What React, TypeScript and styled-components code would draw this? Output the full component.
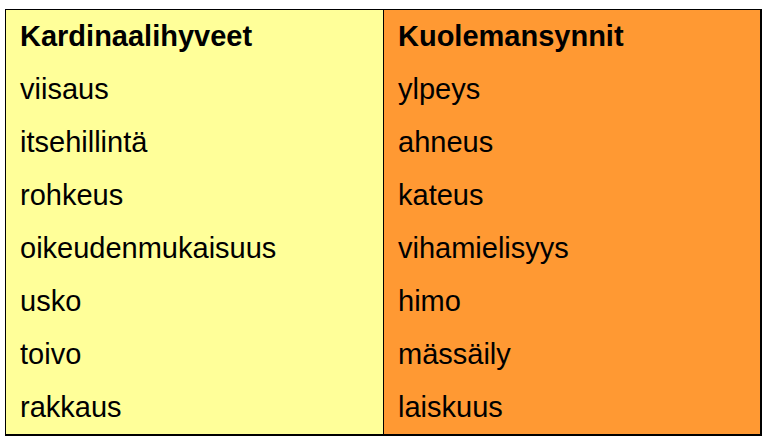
import React from "react";
import styled, { createGlobalStyle } from "styled-components";

const Global = createGlobalStyle`
  html, body { margin: 0; padding: 0; background: #ffffff; }
  body { font-family: "Liberation Sans", Arial, sans-serif; }
`;

const Page = styled.div`
  width: 770px;
  height: 440px;
  box-sizing: border-box;
  padding: 9px 8px 4px 5px;
`;

const Table = styled.div`
  display: grid;
  grid-template-columns: 378px 1fr;
  height: 427px;
  box-sizing: border-box;
  border-top: 1px solid #000;
  border-left: 1px solid #000;
  border-right: 2px solid #000;
  border-bottom: 2px solid #000;
`;

const Column = styled.div<{ $bg: string; $divider?: boolean }>`
  display: grid;
  grid-template-rows: repeat(8, 1fr);
  background: ${(p) => p.$bg};
  border-right: ${(p) => (p.$divider ? "1px solid #000" : "none")};
  padding-left: 14px;
`;

const Cell = styled.div<{ $head?: boolean }>`
  display: flex;
  align-items: center;
  font-size: 29px;
  font-weight: ${(p) => (p.$head ? 700 : 400)};
  color: #000;
  white-space: nowrap;
`;

const virtues = ["viisaus", "itsehillintä", "rohkeus", "oikeudenmukaisuus", "usko", "toivo", "rakkaus"];
const sins = ["ylpeys", "ahneus", "kateus", "vihamielisyys", "himo", "mässäily", "laiskuus"];

export default function App() {
  return (
    <>
      <Global />
      <Page>
        <Table>
          <Column $bg="#ffff99" $divider>
            <Cell $head>Kardinaalihyveet</Cell>
            {virtues.map((v) => (
              <Cell key={v}>{v}</Cell>
            ))}
          </Column>
          <Column $bg="#ff9933">
            <Cell $head>Kuolemansynnit</Cell>
            {sins.map((v) => (
              <Cell key={v}>{v}</Cell>
            ))}
          </Column>
        </Table>
      </Page>
    </>
  );
}
